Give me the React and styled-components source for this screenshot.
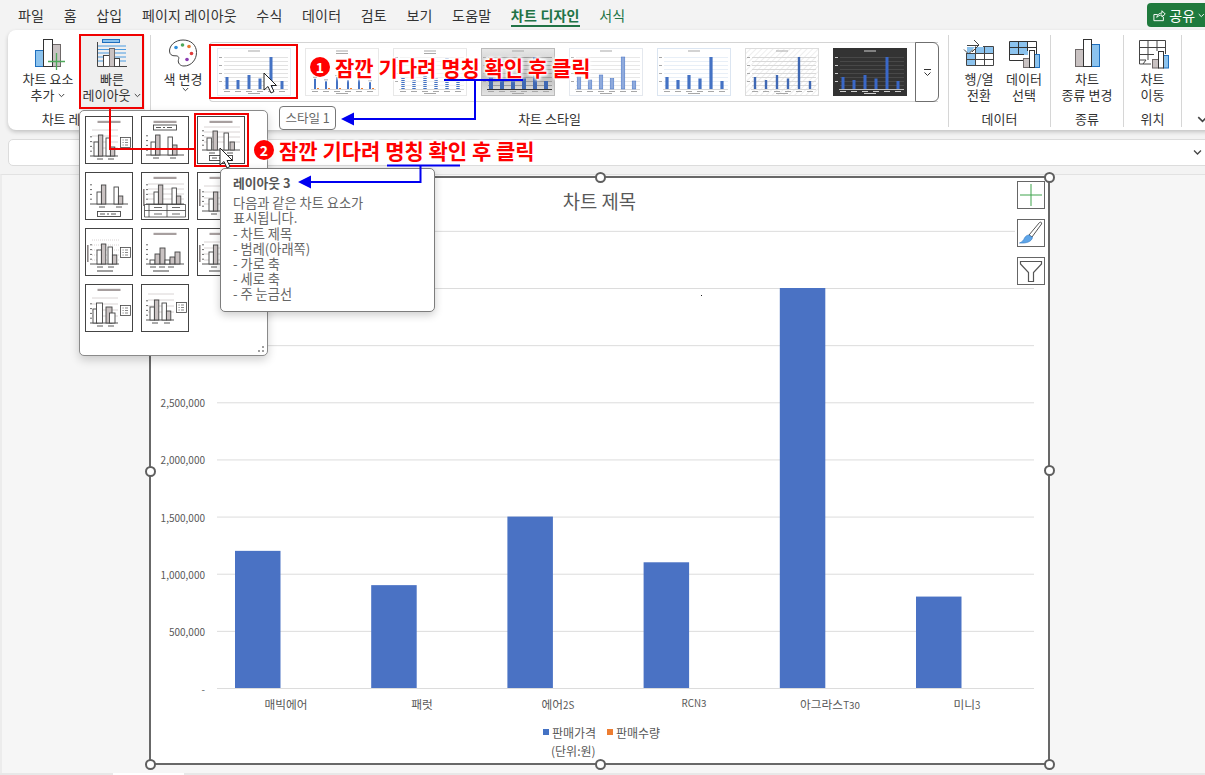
import React from "react";
import styled, { createGlobalStyle } from "styled-components";

const FONT = `"Noto Sans CJK KR", "Noto Sans", sans-serif`;

const Global = createGlobalStyle`
  html, body {
    margin: 0;
    padding: 0;
    background: #f3f3f3;
  }
  body {
    font-family: ${FONT};
    color: #333;
  }
`;

const Page = styled.div`
  position: relative;
  width: 1205px;
  height: 775px;
  overflow: hidden;
  display: flex;
  flex-direction: column;
  background: #f3f3f3;
`;

/* menu bar */
const MenuBar = styled.div`
  display: flex;
  align-items: flex-start;
  height: 30px;
  padding-left: 18px;
  gap: 19.5px;
  font-size: 14px;
  letter-spacing: 0.2px;
`;

const Tab = styled.div`
  position: relative;
  height: 30px;
  line-height: 30px;
  white-space: nowrap;
  color: ${(p) => (p.$active || p.$green ? "#217346" : "#333")};
  font-weight: ${(p) => (p.$active ? 700 : 400)};
  &::after {
    content: "";
    display: ${(p) => (p.$active ? "block" : "none")};
    position: absolute;
    left: 0;
    right: 0;
    top: 25px;
    height: 2px;
    background: #217346;
  }
`;

const Share = styled.div`
  margin: 3px 0 0 auto;
  width: 58px;
  height: 24px;
  flex: none;
  display: flex;
  align-items: center;
  gap: 3px;
  padding-left: 5px;
  box-sizing: border-box;
  background: #1f7a3d;
  color: #fff;
  font-size: 14px;
  border-radius: 4px 0 0 4px;
  white-space: nowrap;
`;

/* ribbon */
const Ribbon = styled.div`
  display: flex;
  height: 100px;
  margin: 0 -10px 0 8px;
  padding: 5px 0 3px;
  box-sizing: border-box;
  background: #fff;
  border-radius: 8px;
  box-shadow: 0 2px 4px rgba(0, 0, 0, 0.2);
`;

const Group = styled.div`
  display: flex;
  flex-direction: column;
  flex: none;
  width: ${(p) => p.$w}px;
  box-sizing: border-box;
  border-right: ${(p) => (p.$last ? "none" : "1px solid #d6d6d6")};
`;

const GroupBody = styled.div`
  display: flex;
  height: 76px;
  padding-left: ${(p) => p.$pad || 0}px;
`;

const GroupLabel = styled.div`
  height: 16px;
  line-height: 16px;
  font-size: 13px;
  text-align: center;
  color: #333;
`;

const RibbonButton = styled.div`
  display: flex;
  flex-direction: column;
  align-items: center;
  width: ${(p) => p.$w}px;
  height: 75px;
  margin-left: ${(p) => p.$ml || 0}px;
  flex: none;
  background: ${(p) => (p.$active ? "#efefef" : "transparent")};
  font-size: 13px;
  line-height: 16px;
  text-align: center;
  white-space: nowrap;
`;

const IconSlot = styled.div`
  height: 33px;
  margin: 3px 0 0;
  display: flex;
  justify-content: center;
`;

const Gallery = styled.div`
  display: flex;
  align-items: center;
  width: 729px;
  height: 60px;
  margin: 7px 0 0 1px;
  flex: none;
  box-sizing: border-box;
  border-top: 1px solid #d4d4d4;
  border-bottom: 1px solid #d4d4d4;
  border-left: 1px solid #d4d4d4;
  border-radius: 4px 0 0 4px;
  padding-left: 7px;
  gap: 14px;
`;

const GalleryMore = styled.div`
  margin-left: -6px;
  width: 24px;
  height: 60px;
  flex: none;
  box-sizing: border-box;
  border: 1px solid #6f6f6f;
  border-radius: 0 6px 6px 0;
  display: flex;
  align-items: center;
  justify-content: center;
`;

const ThumbSvg = styled.svg`
  display: block;
  flex: none;
`;

/* formula bar */
const FormulaBar = styled.div`
  height: 27px;
  margin: 9px -6px 0 8px;
  box-sizing: border-box;
  background: #fff;
  border: 1px solid #dcdcdc;
  border-radius: 5px;
  display: flex;
  align-items: center;
  justify-content: flex-end;
  padding-right: 8px;
`;

/* sheet + chart */
const Sheet = styled.div`
  flex: 1;
  margin-top: 8px;
  box-sizing: border-box;
  background: #f6f6f6;
  border-top: 1px solid #e2e2e2;
  border-left: 2px solid #ececec;
  padding: 1px 0 0 147px;
`;

const ChartFrame = styled.div`
  position: relative;
  width: 901px;
  height: 589px;
  box-sizing: border-box;
  border: 2px solid #686868;
  background: #fff;
`;

const ChartTitle = styled.div`
  height: 47px;
  line-height: 45px;
  font-size: 18.8px;
  text-align: center;
  color: #595959;
`;

const Plot = styled.svg`
  display: block;
`;

const Legend = styled.div`
  display: flex;
  align-items: center;
  margin-top: 9px;
  padding-left: 392px;
  height: 16px;
  font-size: 12px;
  color: #595959;
`;

const LegendItem = styled.div`
  display: flex;
  align-items: center;
  gap: 3px;
  width: 64px;
  white-space: nowrap;
`;

const Swatch = styled.span`
  width: 6px;
  height: 6px;
  background: ${(p) => p.$color};
`;

const Caption = styled.div`
  margin-top: 3px;
  padding-left: 400px;
  line-height: 16px;
  font-size: 12px;
  color: #595959;
`;

const Handle = styled.span`
  position: absolute;
  left: ${(p) => p.$x}px;
  top: ${(p) => p.$y}px;
  width: 11px;
  height: 11px;
  box-sizing: border-box;
  margin: -5.5px 0 0 -5.5px;
  border: 2px solid #5f5f5f;
  border-radius: 50%;
  background: #fff;
`;

const SideTools = styled.div`
  position: absolute;
  left: 866px;
  top: 3px;
  display: flex;
  flex-direction: column;
  gap: 10px;
`;

const SideTool = styled.div`
  width: 28px;
  height: 28px;
  box-sizing: border-box;
  border: 1.5px solid #666;
  background: #fff;
  display: flex;
  align-items: center;
  justify-content: center;
`;

const SheetFoot = styled.div`
  height: 2px;
  background: #e8e8e8;
  padding-left: 113px;
  &::after {
    content: "";
    display: block;
    width: 71px;
    height: 2px;
    background: #fff;
  }
`;

/* layout popup */
const Popup = styled.div`
  position: absolute;
  left: 79px;
  top: 110px;
  width: 189px;
  height: 246px;
  box-sizing: border-box;
  padding: 5px;
  background: #fff;
  border: 1px solid #8a8a8a;
  border-radius: 5px;
  box-shadow: 0 4px 10px rgba(0, 0, 0, 0.18);
  display: grid;
  grid-template-columns: repeat(3, 48px);
  grid-auto-rows: 48px;
  gap: 8px;
  align-content: start;
`;

const LayoutCell = styled.div`
  box-sizing: border-box;
  width: 48px;
  height: 48px;
  border: 1.5px solid #444;
  background: #fff;
`;

const Grip = styled.svg`
  position: absolute;
  right: 2px;
  bottom: 2px;
`;

const Tooltip = styled.div`
  position: absolute;
  left: 220px;
  top: 168px;
  width: 215px;
  height: 144px;
  box-sizing: border-box;
  padding: 6px 12px;
  background: #fff;
  border: 1px solid #7d7d7d;
  border-radius: 5px;
  box-shadow: 0 3px 8px rgba(0, 0, 0, 0.2);
  font-size: 13.2px;
  line-height: 15.2px;
  color: #666;
`;

const TipTitle = styled.div`
  margin-bottom: 5px;
  font-size: 12.8px;
  color: #555;
  font-weight: 700;
`;

const StyleTip = styled.div`
  position: absolute;
  left: 279px;
  top: 106px;
  width: 57px;
  height: 24px;
  box-sizing: border-box;
  background: #fff;
  border: 1px solid #777;
  border-radius: 4px;
  font-size: 12.5px;
  line-height: 22px;
  text-align: center;
  color: #666;
`;

/* annotations */
const Note = styled.div`
  position: absolute;
  left: ${(p) => p.$x}px;
  top: ${(p) => p.$y}px;
  display: flex;
  align-items: center;
  gap: 5px;
  height: 26px;
  font-size: 21px;
  font-weight: 700;
  color: #ff0000;
  white-space: nowrap;
  text-shadow: 0 0 2px #fff, 0 0 3px #fff, 1px 1px 3px #fff, -1px -1px 3px #fff,
    1px -1px 3px #fff, -1px 1px 3px #fff, 0 0 5px #fff;
`;

const NoteBadge = styled.span`
  width: 20px;
  height: 20px;
  border-radius: 50%;
  background: #ff0000;
  color: #fff;
  font-size: 14px;
  line-height: 20px;
  text-align: center;
  text-shadow: none;
  box-shadow: 0 0 3px #fff;
`;

const Marks = styled.svg`
  position: absolute;
  left: 0;
  top: 0;
  pointer-events: none;
`;

const Cursor = styled.svg`
  position: absolute;
  left: ${(p) => p.$x}px;
  top: ${(p) => p.$y}px;
`;

/* ---- icons ---- */
const Chevron = ({ color = "#444", size = 7 }) => (
  <svg width={size} height={size - 2} viewBox="0 0 7 5">
    <path d="M0.8 1 L3.5 3.7 L6.2 1" fill="none" stroke={color} strokeWidth="1" />
  </svg>
);

const InlineChevron = styled.span`
  display: inline-block;
  margin-left: 4px;
  vertical-align: 2px;
  line-height: 0;
`;

const AddElementIcon = () => (
  <svg width="36" height="33" viewBox="0 0 36 33">
    <rect x="5.5" y="12.5" width="8" height="16" fill="#8cc3ee" stroke="#1f6fbd" />
    <rect x="22.5" y="6.5" width="8" height="22" fill="#c9c2c2" stroke="#6e6868" />
    <rect x="13.5" y="1.5" width="9" height="27" fill="#fff" stroke="#333" />
    <path d="M26.5 15 V32 M18 23.5 H35" stroke="#4ea95a" strokeWidth="1.3" />
  </svg>
);

const QuickLayoutIcon = () => (
  <svg width="32" height="30" viewBox="0 0 32 30">
    <rect x="6.5" y="1.5" width="17" height="3" fill="#8cc3ee" stroke="#1f6fbd" />
    <path d="M2 8 H30 M2 11.5 H30 M2 15 H30 M2 19 H30 M2 23 H30" stroke="#4a9be0" strokeWidth="1" />
    <path d="M1.5 4 V28.5 H31" fill="none" stroke="#444" strokeWidth="1" />
    <rect x="7.5" y="17.5" width="6" height="11" fill="#fff" stroke="#444" />
    <rect x="13.5" y="10.5" width="5" height="18" fill="#c9c2c2" stroke="#6e6868" />
    <rect x="18.5" y="20.5" width="5" height="8" fill="#fff" stroke="#444" />
  </svg>
);

const PaletteIcon = () => (
  <svg width="30" height="30" viewBox="0 0 30 30">
    <path
      d="M15 2 C7 2 1.5 7.5 1.5 13 C1.5 16.5 4 18 7 17.8 C10 17.6 11.5 19 10.5 21.5 C9.5 25 12 28 16 28 C23.5 28 28.5 21.5 28.5 14.5 C28.5 7 23 2 15 2 Z"
      fill="#fff"
      stroke="#444"
      strokeWidth="1"
    />
    <circle cx="8" cy="9.5" r="1.8" fill="#2f8fdc" />
    <circle cx="14.5" cy="7" r="1.8" fill="#4ea95a" />
    <circle cx="21" cy="8.5" r="1.8" fill="#e8792c" />
    <circle cx="23.5" cy="15.5" r="1.8" fill="#e03c3c" />
    <circle cx="19" cy="21.5" r="1.8" fill="#8a3ab0" />
  </svg>
);

const SwitchIcon = () => (
  <svg width="32" height="30" viewBox="0 0 32 30">
    <path d="M4 9 H12 L4 17 Z M12 9 H21 V15 H12 Z M21 9 H31 V15 H21 Z M4 15 H12 V27 H4 Z" fill="#8cc3ee" />
    <path
      d="M3.5 15 V27.5 H30.5 V8.5 H20 M12.5 8.5 V27.5 M21.5 8.5 V27.5 M3.5 15.5 H30.5 M3.5 21.5 H30.5"
      fill="none"
      stroke="#444"
      strokeWidth="1"
    />
    <path d="M4 7.5 H15 M11 2 L16 7 L9 14 M1 11.5 L5.5 16 L10 11.5" fill="none" stroke="#444" strokeWidth="1" />
  </svg>
);

const SelectDataIcon = () => (
  <svg width="32" height="30" viewBox="0 0 32 30">
    <rect x="2" y="3" width="18" height="14" fill="#8cc3ee" />
    <path
      d="M1.5 3.5 H28.5 V16 M1.5 3.5 V22.5 H16 M1.5 9.5 H28.5 M1.5 16.5 H16 M10.5 3.5 V17 M19.5 3.5 V13"
      fill="none"
      stroke="#333"
      strokeWidth="1"
    />
    <rect x="15.5" y="20.5" width="6" height="9" fill="#c9c2c2" stroke="#6e6868" />
    <rect x="26.5" y="16.5" width="5" height="13" fill="#8cc3ee" stroke="#1f6fbd" />
    <rect x="21.5" y="12.5" width="5" height="17" fill="#fff" stroke="#333" />
  </svg>
);

const ChartTypeIcon = () => (
  <svg width="27" height="30" viewBox="0 0 27 30">
    <rect x="1.5" y="11.5" width="8" height="17" fill="#c9c2c2" stroke="#6e6868" />
    <rect x="17.5" y="6.5" width="8" height="22" fill="#8cc3ee" stroke="#1f6fbd" />
    <rect x="9.5" y="1.5" width="8" height="27" fill="#fff" stroke="#333" />
  </svg>
);

const MoveChartIcon = () => (
  <svg width="32" height="31" viewBox="0 0 32 31">
    <path
      d="M2.5 22 V2.5 H28.5 V16 M2.5 9.5 H28.5 M2.5 16.5 H17 M11 2.5 V22 M20 2.5 V13 M2.5 22 H9 L6 26 H2.5 V22 Z"
      fill="none"
      stroke="#444"
      strokeWidth="1"
    />
    <path d="M6 26 H14" stroke="#444" />
    <rect x="15.5" y="21.5" width="6" height="8.5" fill="#c9c2c2" stroke="#6e6868" />
    <rect x="26.5" y="17.5" width="5" height="12.5" fill="#8cc3ee" stroke="#1f6fbd" />
    <rect x="21.5" y="13.5" width="5" height="16.5" fill="#fff" stroke="#333" />
  </svg>
);

/* ---- gallery thumbnails ---- */
const thumbHeights = [12, 9, 14, 10.5, 32, 8];

const thumbStyles = [
  { bg: "#fff", grid: "#e2e2e2", bar: "#4472c4", edge: "#e6ecf4", w: 3 },
  { bg: "#fff", grid: null, bar: "#4472c4", edge: "#e8e8e8", w: 2, tops: true, doubleTitle: true },
  { bg: "#fff", grid: "#f1f1f1", bar: "#4472c4", edge: "#e8e8e8", w: 3.4, dashed: true, doubleTitle: true },
  { bg: "url(#thumbGrey)", grid: "#9a9a9a", bar: "#3f68b4", edge: "#bbb", w: 4, base: "#333" },
  { bg: "#fff", grid: "#e8e8e8", bar: "#8faadc", edge: "#e4e8ee", w: 3.6, outline: "#4472c4" },
  { bg: "#fff", grid: "#e8eff7", bar: "#4472c4", edge: "#dbe5f1", w: 3.2 },
  { bg: "url(#thumbHatch)", grid: "#d8d8d8", bar: "#3f68b4", edge: "#dcdcdc", w: 2.4 },
  { bg: "#333", grid: "#484848", bar: "#3a68c8", edge: "#333", w: 3, base: "#bbb", dark: true },
];

const ThumbDefs = () => (
  <defs>
    <linearGradient id="thumbGrey" x1="0" y1="0" x2="0" y2="1">
      <stop offset="0" stopColor="#e8e8e8" />
      <stop offset="0.6" stopColor="#bdbdbd" />
      <stop offset="1" stopColor="#e4e4e4" />
    </linearGradient>
    <pattern id="thumbHatch" width="4" height="4" patternUnits="userSpaceOnUse" patternTransform="rotate(45)">
      <rect width="4" height="4" fill="#fff" />
      <path d="M0 0 V4" stroke="#dedede" strokeWidth="1" />
    </pattern>
  </defs>
);

const ChartThumb = ({ s, defs }) => {
  const text = s.dark ? "#cfcfcf" : "#a8a8a8";
  return (
    <ThumbSvg width="74" height="48" viewBox="0 0 74 48">
      {defs && <ThumbDefs />}
      <rect x="0.5" y="0.5" width="73" height="47" fill={s.bg} stroke={s.edge} />
      <rect x="31" y="2.5" width="12" height="1" fill={text} />
      {s.doubleTitle && <rect x="31" y="5" width="12" height="1" fill={text} />}
      {s.grid &&
        [9, 13, 17, 21, 25, 29, 33, 37].map((y) => (
          <rect key={y} x="7" y={y} width="64" height="1" fill={s.grid} />
        ))}
      {s.grid && [9, 17, 25, 33].map((y) => <rect key={y} x="2" y={y} width="3" height="1" fill={text} />)}
      <rect x="6" y="41" width="65" height="1" fill={s.base || "#d8d8d8"} />
      {thumbHeights.map((h, i) => {
        const cx = 10 + i * 11;
        const height = s.tops ? h * 0.85 : h;
        return (
          <g key={i}>
            {s.dashed ? (
              <path d={`M${cx} 41 V${41 - height}`} stroke={s.bar} strokeWidth={s.w} strokeDasharray="1 1" />
            ) : (
              <rect
                x={cx - s.w / 2}
                y={41 - height}
                width={s.w}
                height={height}
                fill={s.bar}
                stroke={s.outline}
                strokeWidth={s.outline ? 0.5 : 0}
              />
            )}
            {s.tops && <rect x={cx - 2} y={39 - height} width="4" height="1" fill="#aaa" />}
            {s.tops && <rect x={cx + 2} y="40" width="2" height="1" fill="#ed7d31" />}
            <rect x={cx - 3} y="43" width="6" height="1" fill={text} />
          </g>
        );
      })}
      <rect x="31" y="45" width="12" height="1" fill={text} />
    </ThumbSvg>
  );
};

/* ---- layout icons ---- */
const RightLegend = ({ y }) => (
  <>
    <rect x="35.5" y={y + 0.5} width="10" height="10" fill="#fff" stroke="#444" strokeWidth="0.8" />
    <path
      d={`M37.5 ${y + 3}h1.2 M40 ${y + 3}h3 M37.5 ${y + 5.5}h1.2 M40 ${y + 5.5}h3 M37.5 ${y + 8}h1.2 M40 ${y + 8}h3`}
      stroke="#555"
      strokeWidth="0.7"
    />
  </>
);

const WideLegend = ({ y }) => (
  <>
    <rect x="12.5" y={y + 0.5} width="23" height="5" fill="#fff" stroke="#444" strokeWidth="0.9" />
    <path d={`M15 ${y + 3}h5 M22 ${y + 3}h2 M26 ${y + 3}h5`} stroke="#444" strokeWidth="0.9" />
  </>
);

const LayoutIcon = ({ title, legendRight, legendWide, grid, dotted, bars, base, end = 43, labels, table, yTitle, xTitle }) => (
  <svg width="45" height="45" viewBox="1 1 45 45" style={{ display: "block" }}>
    {title && <rect x={legendRight ? 12.5 : 12.5} y="4.8" width="23" height="2.2" fill="#a79f9f" />}
    {grid &&
      grid.map((y) => (
        <path key={y} d={`M7 ${y} H${end}`} stroke="#cfc9c9" strokeWidth="0.8" strokeDasharray={dotted ? "1 1" : undefined} />
      ))}
    {yTitle && <rect x="2" y="17" width="1.6" height="17" fill="#8b8585" />}
    {[0.2, 0.4, 0.6, 0.8].map((f) => (
      <path key={f} d={`M5 ${base - f * 24}h2`} stroke="#444" strokeWidth="0.8" />
    ))}
    <path d={`M5 ${base} H${end}`} stroke="#444" strokeWidth="0.9" />
    {bars.map(([x, h, g, w = 4.4], i) => (
      <rect key={i} x={x} y={base - h} width={w} height={h} fill={g ? "#c9c2c2" : "#fff"} stroke="#444" strokeWidth="0.9" />
    ))}
    {labels && labels.map((x) => <path key={x} d={`M${x} ${base + 3}h6`} stroke="#444" strokeWidth="0.9" />)}
    {xTitle && <path d={`M12 ${base + 7}h16`} stroke="#777" strokeWidth="1.4" />}
    {legendRight !== undefined && <RightLegend y={legendRight} />}
    {legendWide !== undefined && <WideLegend y={legendWide} />}
    {table && (
      <path
        d="M3.5 32.5 H44.5 V45 H3.5 Z M3.5 38.5 H44.5 M8 32.5 V45 M26 32.5 V45 M13 35.5h8 M31 35.5h8 M13 42h8 M31 42h8"
        fill="none"
        stroke="#444"
        strokeWidth="0.8"
      />
    )}
  </svg>
);

const layouts = [
  {
    title: true, legendRight: 21, grid: [14, 20, 26, 32], base: 40, end: 33, labels: [12, 23],
    bars: [[9, 14], [13.4, 21, true], [21, 18], [25.4, 9, true]],
  },
  {
    title: true, legendWide: 8.5, base: 39, labels: [12, 29],
    bars: [[10, 13], [14.6, 20, true], [27, 18], [31.6, 10, true]],
  },
  {
    title: true, legendWide: 39, grid: [11, 16, 21, 26], base: 34, labels: [12, 30],
    bars: [[10, 12], [16, 19, true], [27, 17], [33, 8, true]],
  },
  {
    legendWide: 39, base: 32, labels: [14, 31],
    bars: [[12, 12], [16.4, 19, true], [29, 17], [33.4, 8, true]],
  },
  {
    title: true, table: true, yTitle: true, grid: [12, 17, 22, 27], base: 32,
    bars: [[13, 12], [17.4, 19, true], [31, 16], [35.4, 8, true]],
  },
  {
    title: true, yTitle: true, grid: [14, 20, 26, 32], base: 39, labels: [14],
    bars: [[12, 12], [16.4, 19, true], [29, 16], [33.4, 8, true]],
  },
  {
    legendRight: 19, yTitle: true, grid: [12, 17, 22, 27, 32], dotted: true, base: 36, end: 34, labels: [12, 23], xTitle: true,
    bars: [[12, 14], [16.4, 20, true], [23, 17], [27.4, 9, true]],
  },
  {
    title: true, base: 36, labels: [9, 18, 27], xTitle: true,
    bars: [[9, 4, false, 5], [14, 10, true, 5], [19, 16, true, 5], [24, 4, false, 5], [29, 7, true, 5], [34, 12, true, 5]],
  },
  {
    title: true, yTitle: true, grid: [14, 20, 26, 32], base: 36, labels: [14], xTitle: true,
    bars: [[12, 12], [16.4, 19, true], [29, 16], [33.4, 8, true]],
  },
  {
    title: true, legendRight: 21, grid: [14, 20, 26, 32], base: 39, end: 33, labels: [12, 23],
    bars: [[8, 14], [11.5, 20, false, 6], [21, 16, true, 6], [24.5, 10, false, 5.5]],
  },
  {
    legendRight: 18, grid: [10, 16, 22, 28], base: 36, end: 33, labels: [11, 23],
    bars: [[9, 13], [13.4, 20, true], [21, 17], [25.4, 9, true]],
  },
];

/* ---- chart data ---- */
const categories = [
  { name: "매빅에어", value: 1200000, cx: 286 },
  { name: "패럿", value: 900000, cx: 422 },
  { name: "에어", sub: "2S", value: 1500000, cx: 558 },
  { sub: "RCN3", value: 1100000, cx: 694, up: true },
  { name: "아그라스", sub: "T30", value: 3500000, cx: 830 },
  { name: "미니", sub: "3", value: 800000, cx: 967 },
];

const toY = (v) => 689 - (v * 400) / 3500000;

const ticks = [0, 500000, 1000000, 1500000, 2000000, 2500000, 3000000, 3500000, 4000000];

const ChartPlot = () => (
  <Plot width="897" height="490" viewBox="151 226 897 490" fontFamily={FONT}>
    {ticks.map((t) => (
      <g key={t}>
        <line x1="217" x2={t === 4000000 ? 1015 : 1034} y1={toY(t) + 0.5} y2={toY(t) + 0.5} stroke="#dcdcdc" />
        <text x="205" y={toY(t) + 5} textAnchor="end" fontSize="10" fill="#595959">
          {t === 0 ? "-" : t.toLocaleString("en-US")}
        </text>
      </g>
    ))}
    {categories.map((c, i) => (
      <g key={c.cx}>
        <rect x={235 + i * 136.2} y={toY(c.value)} width="45.5" height={689 - toY(c.value)} fill="#4a72c4" />
        <text x={c.cx} y={c.up ? 708 : 710} textAnchor="middle" fontSize="11.7" fill="#595959">
          {c.name}
          {c.sub && <tspan fontSize="9.8">{c.sub}</tspan>}
        </text>
      </g>
    ))}
    <rect x="701" y="296" width="1" height="1" fill="#222" />
  </Plot>
);

const handles = [
  [-1, 293],
  [449, -1],
  [898, -1],
  [898, 292],
  [-1, 586],
  [449, 586],
  [898, 586],
];

const CursorArrow = ({ x, y }) => (
  <Cursor $x={x} $y={y} width="15" height="22" viewBox="0 0 15 22">
    <path d="M1 1 V18 L5 14.5 L8 21 L11 19.5 L8 13.5 L13.5 13.5 Z" fill="#fff" stroke="#222" strokeWidth="1" />
  </Cursor>
);

const tabs = ["파일", "홈", "삽입", "페이지 레이아웃", "수식", "데이터", "검토", "보기", "도움말"];

export default function App() {
  return (
    <>
      <Global />
      <Page>
        <MenuBar>
          {tabs.map((t) => (
            <Tab key={t}>{t}</Tab>
          ))}
          <Tab $active>차트 디자인</Tab>
          <Tab $green>서식</Tab>
          <Share>
            <svg width="15" height="14" viewBox="0 0 15 14">
              <path
                d="M2 6.5 V13 H12 V9 M2 6.5 H6 M5 9.5 C5.5 6.5 8 5 10.5 5 V2.5 L14 6 L10.5 9 V7 C8.5 7 6.5 8 5 9.5 Z"
                fill="none"
                stroke="#fff"
                strokeWidth="1"
              />
            </svg>
            공유
            <Chevron color="#fff" />
          </Share>
        </MenuBar>

        <Ribbon>
          <Group $w={143}>
            <GroupBody $pad={10}>
              <RibbonButton $w={60}>
                <IconSlot>
                  <AddElementIcon />
                </IconSlot>
                <span>차트 요소</span>
                <span>
                  추가
                  <InlineChevron>
                    <Chevron />
                  </InlineChevron>
                </span>
              </RibbonButton>
              <RibbonButton $w={66} $ml={1} $active>
                <IconSlot>
                  <QuickLayoutIcon />
                </IconSlot>
                <span>빠른</span>
                <span>
                  레이아웃
                  <InlineChevron>
                    <Chevron />
                  </InlineChevron>
                </span>
              </RibbonButton>
            </GroupBody>
            <GroupLabel>차트 레이아웃</GroupLabel>
          </Group>

          <Group $w={798}>
            <GroupBody $pad={7}>
              <RibbonButton $w={50}>
                <IconSlot>
                  <PaletteIcon />
                </IconSlot>
                <span>색 변경</span>
                <InlineChevron>
                  <Chevron />
                </InlineChevron>
              </RibbonButton>
              <Gallery>
                {thumbStyles.map((s, i) => (
                  <ChartThumb key={i} s={s} defs={i === 0} />
                ))}
                <GalleryMore>
                  <svg width="9" height="9" viewBox="0 0 9 9">
                    <path d="M1 1.5 H8 M1.5 4.5 L4.5 7.5 L7.5 4.5" fill="none" stroke="#333" strokeWidth="1" />
                  </svg>
                </GalleryMore>
              </Gallery>
            </GroupBody>
            <GroupLabel>차트 스타일</GroupLabel>
          </Group>

          <Group $w={102}>
            <GroupBody $pad={8}>
              <RibbonButton $w={44}>
                <IconSlot>
                  <SwitchIcon />
                </IconSlot>
                <span>행/열</span>
                <span>전환</span>
              </RibbonButton>
              <RibbonButton $w={46}>
                <IconSlot>
                  <SelectDataIcon />
                </IconSlot>
                <span>데이터</span>
                <span>선택</span>
              </RibbonButton>
            </GroupBody>
            <GroupLabel>데이터</GroupLabel>
          </Group>

          <Group $w={73}>
            <GroupBody>
              <RibbonButton $w={72}>
                <IconSlot>
                  <ChartTypeIcon />
                </IconSlot>
                <span>차트</span>
                <span>종류 변경</span>
              </RibbonButton>
            </GroupBody>
            <GroupLabel>종류</GroupLabel>
          </Group>

          <Group $w={58}>
            <GroupBody>
              <RibbonButton $w={57}>
                <IconSlot>
                  <MoveChartIcon />
                </IconSlot>
                <span>차트</span>
                <span>이동</span>
              </RibbonButton>
            </GroupBody>
            <GroupLabel>위치</GroupLabel>
          </Group>

          <Group $w={40} $last>
            <GroupBody />
            <GroupLabel>
              <Chevron size={11} />
            </GroupLabel>
          </Group>
        </Ribbon>

        <FormulaBar>
          <Chevron size={9} />
        </FormulaBar>

        <Sheet>
          <ChartFrame>
            <ChartTitle>차트 제목</ChartTitle>
            <ChartPlot />
            <Legend>
              <LegendItem>
                <Swatch $color="#4472c4" />
                판매가격
              </LegendItem>
              <LegendItem>
                <Swatch $color="#ed7d31" />
                판매수량
              </LegendItem>
            </Legend>
            <Caption>(단위:원)</Caption>
            <SideTools>
              <SideTool>
                <svg width="22" height="22" viewBox="0 0 22 22">
                  <path d="M11 0 V22 M0 11 H22" stroke="#3fa34d" strokeWidth="1" />
                </svg>
              </SideTool>
              <SideTool>
                <svg width="26" height="26" viewBox="0 0 26 26">
                  <path d="M11 15 L21.5 2.5 C22.5 1.5 24.3 2.6 23.5 4 L14 17 Z" fill="#fff" stroke="#555" strokeWidth="1" />
                  <path d="M11 15 L14.5 17.5 C13.5 22 8 23.5 1.5 23 C4 22 5.5 20.5 6.5 18 C7.5 16 9.5 15 11 15 Z" fill="#5ea5e8" stroke="#2f78c4" strokeWidth="0.6" />
                </svg>
              </SideTool>
              <SideTool>
                <svg width="24" height="24" viewBox="0 0 24 24">
                  <path d="M1.5 2.5 H22.5 V5 L14.5 13.5 V22.5 H9.5 V13.5 L1.5 5 Z" fill="#fff" stroke="#555" strokeWidth="1.2" />
                </svg>
              </SideTool>
            </SideTools>
            {handles.map(([x, y]) => (
              <Handle key={`${x}-${y}`} $x={x} $y={y} />
            ))}
          </ChartFrame>
        </Sheet>
        <SheetFoot />

        <Popup>
          {layouts.map((l, i) => (
            <LayoutCell key={i}>
              <LayoutIcon {...l} />
            </LayoutCell>
          ))}
          <Grip width="8" height="8" viewBox="0 0 8 8">
            <path d="M5 1h2v2h-2z M1 5h2v2h-2z M5 5h2v2h-2z" fill="#a0a0a0" />
          </Grip>
        </Popup>

        <StyleTip>스타일 1</StyleTip>

        <Tooltip>
          <TipTitle>레이아웃 3</TipTitle>
          <div>다음과 같은 차트 요소가</div>
          <div>표시됩니다.</div>
          <div>- 차트 제목</div>
          <div>- 범례(아래쪽)</div>
          <div>- 가로 축</div>
          <div>- 세로 축</div>
          <div>- 주 눈금선</div>
        </Tooltip>

        <Note $x={310} $y={54}>
          <NoteBadge>1</NoteBadge>
          잠깐 기다려 명칭 확인 후 클릭
        </Note>
        <Note $x={254} $y={137}>
          <NoteBadge>2</NoteBadge>
          잠깐 기다려 명칭 확인 후 클릭
        </Note>

        <Marks width="1205" height="775" viewBox="0 0 1205 775">
          <g fill="none" stroke="#f00000" strokeWidth="2">
            <rect x="80" y="35" width="63" height="73" />
            <rect x="210" y="45" width="87" height="53" />
            <rect x="195" y="114" width="53" height="52" />
            <path d="M110 109 V149 H195" />
          </g>
          <g fill="none" stroke="#0000f0" strokeWidth="2">
            <path d="M444 80 H523 M475 80 V119 H350" />
            <path d="M387 165.5 H460 M420.5 165.5 V182 H308" />
          </g>
          <path d="M341 119 L354 112.5 V125.5 Z" fill="#0000f0" />
          <path d="M298 182 L311 175.5 V188.5 Z" fill="#0000f0" />
        </Marks>

        <CursorArrow x={263} y={72} />
        <CursorArrow x={219} y={147} />
      </Page>
    </>
  );
}
